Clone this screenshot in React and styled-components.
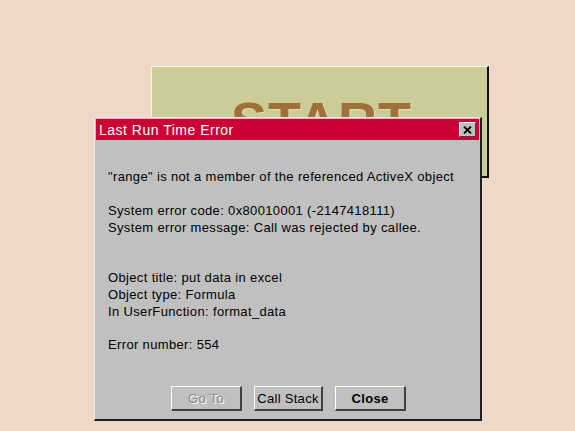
import React from "react";
import styled, { createGlobalStyle } from "styled-components";

const GlobalStyle = createGlobalStyle`
  html, body {
    margin: 0;
    padding: 0;
    background: #f0d8c8;
  }
  body {
    font-family: "Liberation Sans", Arial, sans-serif;
  }
`;

const Desktop = styled.div`
  position: relative;
  width: 575px;
  height: 431px;
  overflow: hidden;
  background: #f0d8c8;
`;

const StartPanel = styled.div`
  position: absolute;
  left: 151px;
  top: 66px;
  width: 338px;
  height: 112px;
  box-sizing: border-box;
  background: #cccc99;
  border-top: 1px solid #f4f4e0;
  border-left: 1px solid #f4f4e0;
  border-right: 2px solid #111;
  border-bottom: 2px solid #111;
  display: flex;
  justify-content: center;
  padding-top: 27px;
`;

const StartLabel = styled.div`
  font-family: "Liberation Sans", Arial, sans-serif;
  font-weight: bold;
  font-size: 54px;
  line-height: 1;
  color: #a0703a;
  letter-spacing: 1px;
  padding-left: 4px;
  text-shadow: 1px 1px 0 #e8e0a0;
`;

const Dialog = styled.div`
  position: absolute;
  left: 94px;
  top: 117px;
  width: 388px;
  height: 304px;
  box-sizing: border-box;
  background: #c0c0c0;
  border-top: 1px solid #e8e8e8;
  border-left: 1px solid #e8e8e8;
  border-right: 2px solid #202020;
  border-bottom: 2px solid #202020;
  display: flex;
  flex-direction: column;
`;

const TitleBar = styled.div`
  height: 21px;
  margin: 1px 1px 0 1px;
  background: #cc0033;
  display: flex;
  align-items: center;
  justify-content: space-between;
  padding: 0 3px 0 3px;
`;

const Title = styled.span`
  color: #ffffff;
  font-size: 14px;
  letter-spacing: 0.5px;
`;

const CloseBox = styled.button`
  width: 17px;
  height: 15px;
  padding: 0;
  background: #c0c0c0;
  border-top: 1px solid #ffffff;
  border-left: 1px solid #ffffff;
  border-right: 1px solid #404040;
  border-bottom: 1px solid #404040;
  display: flex;
  align-items: center;
  justify-content: center;
`;

const Body = styled.div`
  flex: 1;
  padding: 28px 13px 0 13px;
`;

const Line = styled.div`
  font-size: 13px;
  letter-spacing: 0.35px;
  line-height: 17px;
  height: ${(p) => (p.$blank ? 16.5 : 17)}px;
  color: #000;
  white-space: pre;
`;

const ButtonRow = styled.div`
  display: flex;
  justify-content: center;
  gap: 12px;
  padding: 0 0 8px 2px;
`;

const DialogButton = styled.button`
  width: ${(p) => p.$w}px;
  height: 25px;
  padding: 0;
  background: #c0c0c0;
  font-family: "Liberation Sans", Arial, sans-serif;
  font-size: 13px;
  letter-spacing: 0.3px;
  font-weight: ${(p) => (p.$bold ? "bold" : "normal")};
  color: ${(p) => (p.disabled ? "#8a8a8a" : "#000")};
  text-shadow: ${(p) => (p.disabled ? "1px 1px 0 #ffffff" : "none")};
  border-top: 1px solid #ffffff;
  border-left: 1px solid #ffffff;
  border-right: 2px solid #404040;
  border-bottom: 2px solid #404040;
`;

const lines = [
  '"range" is not a member of the referenced ActiveX object',
  "",
  "System error code: 0x80010001 (-2147418111)",
  "System error message: Call was rejected by callee.",
  "",
  "",
  "Object title: put data in excel",
  "Object type: Formula",
  "In UserFunction: format_data",
  "",
  "Error number: 554",
];

export default function App() {
  return (
    <Desktop>
      <GlobalStyle />
      <StartPanel>
        <StartLabel>START</StartLabel>
      </StartPanel>
      <Dialog>
        <TitleBar>
          <Title>Last Run Time Error</Title>
          <CloseBox aria-label="close">
            <svg width="9" height="8" viewBox="0 0 9 8">
              <path d="M1 0.5 L8 7.5 M8 0.5 L1 7.5" stroke="#000" strokeWidth="1.8" />
            </svg>
          </CloseBox>
        </TitleBar>
        <Body>
          {lines.map((l, i) => (
            <Line key={i} $blank={l === ""}>
              {l}
            </Line>
          ))}
        </Body>
        <ButtonRow>
          <DialogButton $w={71} disabled>
            Go To
          </DialogButton>
          <DialogButton $w={69}>Call Stack</DialogButton>
          <DialogButton $w={71} $bold>
            Close
          </DialogButton>
        </ButtonRow>
      </Dialog>
    </Desktop>
  );
}
